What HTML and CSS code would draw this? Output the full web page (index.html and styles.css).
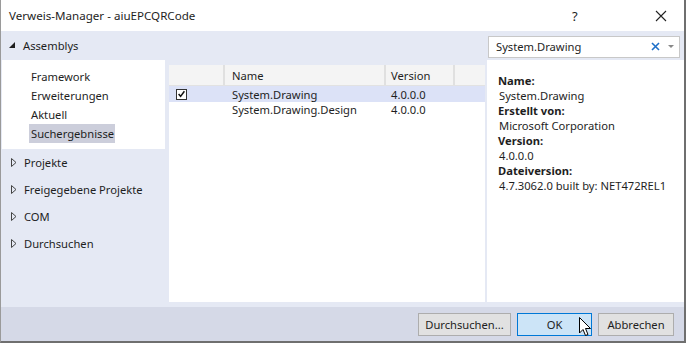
FILE: index.html
```html
<!DOCTYPE html>
<html lang="de">
<head>
<meta charset="utf-8">
<title>Verweis-Manager</title>
<link rel="stylesheet" href="styles.css">
</head>
<body>
<div class="window">
  <div class="titlebar">
    <span class="title">Verweis-Manager - aiuEPCQRCode</span>
    <span class="help">?</span>
    <span class="close">
      <svg width="12" height="12" viewBox="0 0 12 12"><path d="M1 1L11 11M11 1L1 11" stroke="#222" stroke-width="1.1" fill="none"/></svg>
    </span>
  </div>
  <div class="body">
    <div class="topbar">
      <div class="group-head">
        <svg class="tri-open" width="7" height="7" viewBox="0 0 7 7"><path d="M6 0L6 6L0 6Z" fill="#1e1e1e"/></svg>
        <span>Assemblys</span>
      </div>
      <div class="search">
        <span class="search-text">System.Drawing</span>
        <svg class="search-x" width="9" height="9" viewBox="0 0 9 9"><path d="M1 1L8 8M8 1L1 8" stroke="#1e6fc8" stroke-width="1.6" fill="none"/></svg>
        <svg class="search-dd" width="6" height="4" viewBox="0 0 6 4"><path d="M0 0L6 0L3 3Z" fill="#888"/></svg>
      </div>
    </div>
    <div class="content">
      <div class="sidebar">
        <div class="subnav">
          <div class="subitem">Framework</div>
          <div class="subitem">Erweiterungen</div>
          <div class="subitem">Aktuell</div>
          <div class="subitem selected">Suchergebnisse</div>
        </div>
        <div class="tree">
          <div class="treeitem"><svg class="tri" width="6" height="9" viewBox="0 0 6 9"><path d="M0.5 0.5L5 4.5L0.5 8.5Z" fill="none" stroke="#444" stroke-width="1"/></svg><span>Projekte</span></div>
          <div class="treeitem"><svg class="tri" width="6" height="9" viewBox="0 0 6 9"><path d="M0.5 0.5L5 4.5L0.5 8.5Z" fill="none" stroke="#444" stroke-width="1"/></svg><span>Freigegebene Projekte</span></div>
          <div class="treeitem"><svg class="tri" width="6" height="9" viewBox="0 0 6 9"><path d="M0.5 0.5L5 4.5L0.5 8.5Z" fill="none" stroke="#444" stroke-width="1"/></svg><span>COM</span></div>
          <div class="treeitem"><svg class="tri" width="6" height="9" viewBox="0 0 6 9"><path d="M0.5 0.5L5 4.5L0.5 8.5Z" fill="none" stroke="#444" stroke-width="1"/></svg><span>Durchsuchen</span></div>
        </div>
      </div>
      <div class="list">
        <div class="row header">
          <div class="c-check"></div>
          <div class="c-name">Name</div>
          <div class="c-ver">Version</div>
          <div class="c-extra"></div>
        </div>
        <div class="row sel">
          <div class="c-check"><span class="checkbox"><svg width="10" height="10" viewBox="0 0 10 10"><path d="M1.8 5L4 7.6L8.2 2" stroke="#111" stroke-width="1.7" fill="none"/></svg></span></div>
          <div class="c-name">System.Drawing</div>
          <div class="c-ver">4.0.0.0</div>
        </div>
        <div class="row">
          <div class="c-check"></div>
          <div class="c-name">System.Drawing.Design</div>
          <div class="c-ver">4.0.0.0</div>
        </div>
      </div>
      <div class="details">
        <div class="label">Name:</div>
        <div class="value">System.Drawing</div>
        <div class="label">Erstellt von:</div>
        <div class="value">Microsoft Corporation</div>
        <div class="label">Version:</div>
        <div class="value">4.0.0.0</div>
        <div class="label">Dateiversion:</div>
        <div class="value">4.7.3062.0 built by: NET472REL1</div>
      </div>
    </div>
    <div class="footer">
      <button class="btn btn-browse">Durchsuchen...</button>
      <button class="btn btn-ok">OK</button>
      <button class="btn btn-cancel">Abbrechen</button>
      <svg class="cursor" width="13" height="20" viewBox="0 0 13 20"><path d="M0.5 0.5L0.5 16L4 12.5L6.5 18.5L9 17.5L6.5 11.5L11.5 11.5Z" fill="#fff" stroke="#000" stroke-width="1"/></svg>
    </div>
  </div>
</div>
</body>
</html>
```
FILE: styles.css
```css
* { box-sizing: border-box; }
html, body { margin: 0; padding: 0; }
body {
  width: 686px;
  height: 343px;
  overflow: hidden;
  font-family: "Noto Sans", "DejaVu Sans", sans-serif;
  font-size: 11.2px;
  color: #1e1e1e;
  background: #fff;
}
.window {
  width: 686px;
  height: 343px;
  border-left: 1px solid #9a9a9a;
  border-right: 2px solid #6f6f6f;
  border-bottom: 2px solid #6f6f6f;
  display: flex;
  flex-direction: column;
  position: relative;
}
.titlebar {
  height: 31px;
  background: #fff;
  display: flex;
  align-items: center;
  flex-shrink: 0;
}
.title { margin-left: 8px; flex: 1; font-size: 11.6px; }
.help { width: 10px; margin-right: 73px; font-size: 13px; }
.close { display: flex; margin-right: 17px; }

.body {
  flex: 1;
  background: #e5e9f4;
  display: flex;
  flex-direction: column;
}
.topbar {
  height: 29px;
  display: flex;
  align-items: center;
  justify-content: space-between;
  flex-shrink: 0;
}
.group-head { display: flex; align-items: center; margin-left: 8px; }
.group-head span { margin-left: 7px; }
.search {
  width: 192px;
  height: 22px;
  margin-right: 4px;
  margin-top: 2px;
  background: #fff;
  border: 1px solid #c8c8c8;
  display: flex;
  align-items: center;
  padding-left: 7px;
}
.search-text { flex: 1; }
.search-x { margin-right: 8px; }
.search-dd { margin-right: 5px; }

.content {
  height: 242px;
  display: flex;
  flex-shrink: 0;
}
.sidebar { width: 168px; padding-left: 1px; display: flex; flex-direction: column; }
.subnav {
  width: 163px;
  height: 89px;
  background: #fff;
  padding-top: 7px;
  padding-left: 27px;
}
.subitem {
  height: 19px;
  line-height: 19px;
  padding-left: 2px;
}
.subitem.selected { background: #cccedb; width: 86px; }
.tree { display: flex; flex-direction: column; }
.treeitem {
  height: 27px;
  display: flex;
  align-items: center;
  padding-left: 9px;
}
.treeitem span { margin-left: 7px; }

.list {
  width: 316px;
  margin-top: 5px;
  background: #fff;
}
.row { display: flex; height: 15px; align-items: center; }
.row.header {
  height: 21px;
  background: #f4f4f4;
  border-bottom: 1px solid #e2e2e2;
}
.row.sel { background: #dce2f7; height: 16px; }
.c-check { width: 56px; height: 100%; display: flex; align-items: center; padding-left: 7px; }
.c-name { width: 161px; height: 100%; padding-left: 7px; display: flex; align-items: center; }
.c-ver { width: 69px; height: 100%; padding-left: 5px; display: flex; align-items: center; }
.c-extra { flex: 1; height: 100%; }
.header .c-check, .header .c-name, .header .c-ver { border-right: 2px solid #e0e0e0; }
.checkbox {
  width: 11px;
  height: 11px;
  border: 1px solid #333;
  background: #fff;
  display: flex;
  align-items: center;
  justify-content: center;
}
.checkbox svg { display: block; }

.details {
  margin-left: 2px;
  flex: 1;
  background: #fff;
  padding-top: 13px;
  padding-left: 11px;
  line-height: 15px;
}
.label { font-weight: bold; height: 15px; }
.value { padding-left: 1px; height: 15px; }

.footer {
  margin-top: 5px;
  flex: 1;
  background: #d5d9e7;
  display: flex;
  align-items: center;
  justify-content: flex-end;
  padding-right: 10px;
  gap: 6px;
  position: relative;
}
.btn {
  height: 23px;
  font-family: inherit;
  font-size: 11.2px;
  color: #1e1e1e;
  background: #e1e1e1;
  border: 1px solid #adadad;
  padding: 0;
}
.btn-browse { width: 93px; }
.btn-ok { width: 75px; background: #cce4f7; border-color: #0078d7; }
.btn-cancel { width: 76px; }
.cursor { position: absolute; left: 578px; top: 10px; }
```
